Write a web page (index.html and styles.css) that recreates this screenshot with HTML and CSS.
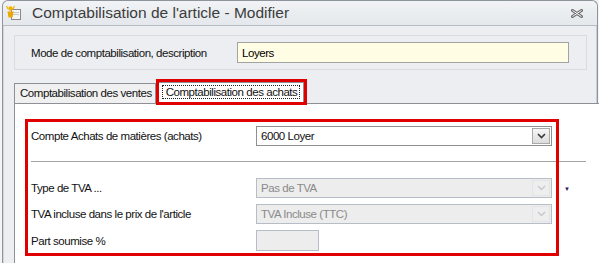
FILE: index.html
```html
<!DOCTYPE html>
<html lang="fr">
  <head>
    <meta charset="UTF-8">
    <title>Comptabilisation de l'article - Modifier</title>
    <link rel="stylesheet" href="styles.css">
  </head>
  <body>
    <div class="window">
      <div class="titlebar">
        <svg class="app-icon" width="16" height="16" viewBox="0 0 16 16">
          <rect x="5.5" y="4.5" width="9" height="10" fill="#f4f4f4" stroke="#8a8a8a"/>
          <rect x="7" y="7" width="6" height="1" fill="#c8c8c8"/>
          <rect x="7" y="9" width="6" height="1" fill="#c8c8c8"/>
          <circle cx="4.5" cy="3.5" r="2.2" fill="#f0b400"/>
          <path d="M1.5 6.5 L7.5 6.5 L6.5 12.5 L2.5 12.5 Z" fill="#e8a800"/>
          <path d="M0.5 1 L2 4 M8.5 1 L7 4" stroke="#f0b400" stroke-width="1.2"/>
        </svg>
        <span class="title">Comptabilisation de l'article - Modifier</span>
        <svg class="close" width="12" height="9" viewBox="0 0 12 9">
          <path d="M1.5 1.5 L10.5 7.5 M10.5 1.5 L1.5 7.5" stroke="#6f6f6f" stroke-width="3" stroke-linecap="square"/>
          <path d="M1.5 1.5 L10.5 7.5 M10.5 1.5 L1.5 7.5" stroke="#f4f5f7" stroke-width="1"/>
        </svg>
      </div>

      <div class="content">
        <div class="groupbox">
          <label class="field-label" for="mode">Mode de comptabilisation, description</label>
          <input class="text-yellow" id="mode" type="text" value="Loyers">
        </div>

        <div class="tabs">
          <div class="tab">Comptabilisation des ventes</div>
          <div class="tab active">
            <span class="focus">Comptabilisation des achats</span>
            <div class="mark mark-tab"></div>
          </div>
        </div>

        <div class="panel">
          <div class="row first">
            <span class="field-label">Compte Achats de matières (achats)</span>
            <div class="select">
              <span class="value">6000 Loyer</span>
              <span class="drop"><svg width="9" height="6" viewBox="0 0 9 6"><path d="M1 1 L4.5 4.5 L8 1" fill="none" stroke="#3a3a3a" stroke-width="1.6"/></svg></span>
            </div>
          </div>

          <hr class="sep">

          <div class="row">
            <span class="field-label">Type de TVA ...</span>
            <div class="select disabled">
              <span class="value">Pas de TVA</span>
              <span class="drop"><svg width="9" height="6" viewBox="0 0 9 6"><path d="M1 1 L4.5 4.5 L8 1" fill="none" stroke="#c4c8ce" stroke-width="1.4"/></svg></span>
            </div>
            <span class="more">&#9660;</span>
          </div>
          <div class="row">
            <span class="field-label">TVA incluse dans le prix de l'article</span>
            <div class="select disabled">
              <span class="value">TVA Incluse (TTC)</span>
              <span class="drop"><svg width="9" height="6" viewBox="0 0 9 6"><path d="M1 1 L4.5 4.5 L8 1" fill="none" stroke="#c4c8ce" stroke-width="1.4"/></svg></span>
            </div>
          </div>
          <div class="row last">
            <span class="field-label">Part soumise %</span>
            <div class="small-input"></div>
          </div>

          <div class="mark mark-panel"></div>
        </div>
      </div>
    </div>
  </body>
</html>
```

FILE: styles.css
```css
body {
    margin: 0;
    background-color: #f3f4f6;
    font-family: "Liberation Sans", Arial, sans-serif;
    font-size: 11.5px;
    letter-spacing: -0.45px;
    color: #111;
    overflow: hidden;
}
.window {
    margin-left: 2px;
    width: 594px;
    height: 300px;
    border: 1px solid #8e949b;
    border-bottom: none;
    border-radius: 6px 6px 0 0;
    background-color: #eceef1;
}
.titlebar {
    height: 24px;
    display: flex;
    align-items: center;
    padding-left: 3px;
    background: linear-gradient(#f1f3f6, #e4e7eb);
    border-bottom: 1px solid #b8bdc4;
    border-radius: 6px 6px 0 0;
}
.app-icon {
    margin-right: 10px;
}
.title {
    font-size: 15.5px;
    letter-spacing: 0;
    color: #3c3c3c;
    flex: 1;
}
.close {
    margin-right: 14px;
}
.content {
    padding: 9px 9px 0 10px;
    border-left: 1px solid #d3d6da;
    border-right: 1px solid #c9ccd1;
    height: 100%;
}
.groupbox {
    height: 33px;
    display: flex;
    align-items: center;
    padding: 0 17px 0 16px;
    border: 1px solid #d8dbdf;
    background-color: #eceef1;
}
.field-label {
    width: 206px;
}
.text-yellow {
    flex: 1;
    height: 21px;
    box-sizing: border-box;
    border: 1px solid #a3a3a3;
    background-color: #fffde4;
    font: inherit;
    letter-spacing: inherit;
    padding: 0 4px;
    margin-left: 0;
}
.tabs {
    display: flex;
    align-items: flex-end;
    margin-top: 10px;
    height: 23px;
}
.tab {
    height: 20px;
    box-sizing: border-box;
    padding: 3px 3px 0 5px;
    border: 1px solid #8d9096;
    border-bottom: none;
    background-color: #f0f0f0;
    white-space: nowrap;
}
.tab.active {
    position: relative;
    z-index: 1;
    height: 22px;
    margin-left: 0;
    margin-bottom: -1px;
    padding: 3px 3px 0 5px;
    background-color: #fff;
}
.focus {
    border: 1px dotted #222;
    padding: 0 2px 0 3px;
}
.panel {
    position: relative;
    width: 570px;
    height: 200px;
    border: 1px solid #8d9096;
    background-color: #fff;
    padding: 22px 0 0 16px;
}
.row {
    display: flex;
    align-items: center;
    height: 20px;
    margin-bottom: 6px;
}
.row .field-label {
    width: 225px;
}
.select {
    width: 296px;
    height: 20px;
    box-sizing: border-box;
    display: flex;
    align-items: stretch;
    border: 1px solid #8f8f8f;
    background-color: #fff;
}
.select .value {
    flex: 1;
    display: flex;
    align-items: center;
    padding-left: 4px;
}
.select .drop {
    width: 16px;
    margin: 1px;
    display: flex;
    align-items: center;
    justify-content: center;
    border: 1px solid #a9a9a9;
    background: linear-gradient(#f6f6f6, #dcdcdc);
}
.select.disabled {
    border-color: #b7bdc7;
    background-color: #ededed;
    color: #8a8a8a;
}
.select.disabled .drop {
    border-color: #e2e4e8;
    background: #eeeeee;
}
.more {
    font-size: 6px;
    color: #1c2250;
    margin-left: 12px;
    margin-top: 2px;
}
.sep {
    margin: 15px 15px 16px 0;
    border: none;
    border-top: 1px solid #a4a4a4;
}
.row.last {
    height: 21px;
}
.small-input {
    width: 63px;
    height: 21px;
    box-sizing: border-box;
    border: 1px solid #b7bdc7;
    background-color: #ededed;
}
.mark {
    position: absolute;
    border: 3px solid #e10000;
    box-sizing: border-box;
}
.mark-tab {
    left: -1px;
    top: -4px;
    right: -4px;
    bottom: -1px;
}
.mark-panel {
    left: 10px;
    top: 15px;
    width: 534px;
    height: 137px;
}
```
